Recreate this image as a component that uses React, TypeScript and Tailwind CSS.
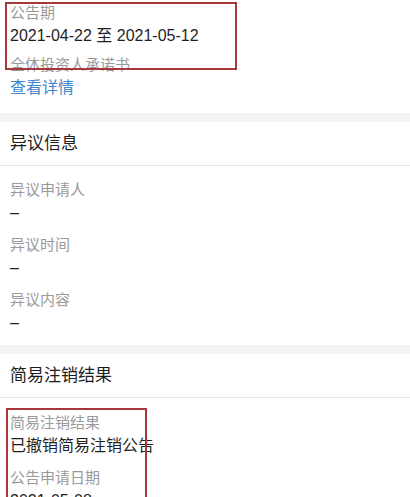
const font = { fontFamily: '"Liberation Sans", "Noto Sans CJK SC", sans-serif' };

type Field = { label: string; value: string; link?: boolean };

function FieldItem({ field }: { field: Field }) {
  return (
    <div>
      <div className="text-[15px] leading-[22px] text-[#9a9a9a]">{field.label}</div>
      <div
        className={
          field.link
            ? 'text-[16px] leading-[24px] text-[#3f86cc]'
            : 'text-[16px] leading-[24px] text-[#1f1f1f]'
        }
      >
        {field.value}
      </div>
    </div>
  );
}

function SectionHeader({ title }: { title: string }) {
  return (
    <div className="h-[44px] flex items-center px-[10px] border-b border-[#e6e6e6]">
      <span className="text-[17px] text-[#1c1c1c]">{title}</span>
    </div>
  );
}

const band = <div className="h-[9px] bg-[#f3f3f3]" />;

export default function App() {
  const notice: Field[] = [
    { label: '公告期', value: '2021-04-22 至 2021-05-12' },
    { label: '全体投资人承诺书', value: '查看详情', link: true },
  ];
  const objection: Field[] = [
    { label: '异议申请人', value: '–' },
    { label: '异议时间', value: '–' },
    { label: '异议内容', value: '–' },
  ];
  const result: Field[] = [
    { label: '简易注销结果', value: '已撤销简易注销公告' },
    { label: '公告申请日期', value: '2021-05-08' },
  ];

  return (
    <div className="relative w-[410px] h-[497px] overflow-hidden bg-white" style={font}>
      <div className="px-[10px] pt-[2px] pb-[13px] flex flex-col gap-[6px]">
        {notice.map((f) => (
          <FieldItem key={f.label} field={f} />
        ))}
      </div>
      {band}
      <SectionHeader title="异议信息" />
      <div className="px-[10px] pt-[13px] pb-[10px] flex flex-col gap-[9px]">
        {objection.map((f) => (
          <FieldItem key={f.label} field={f} />
        ))}
      </div>
      {band}
      <SectionHeader title="简易注销结果" />
      <div className="px-[10px] pt-[14px] flex flex-col gap-[9px]">
        {result.map((f) => (
          <FieldItem key={f.label} field={f} />
        ))}
      </div>

      {/* red annotation boxes */}
      <div className="absolute left-[5px] top-[2px] w-[232px] h-[68px] border-2 border-[#a8363d] pointer-events-none" />
      <div className="absolute left-[6px] top-[408px] w-[141px] h-[100px] border-2 border-[#a8363d] pointer-events-none" />
    </div>
  );
}
